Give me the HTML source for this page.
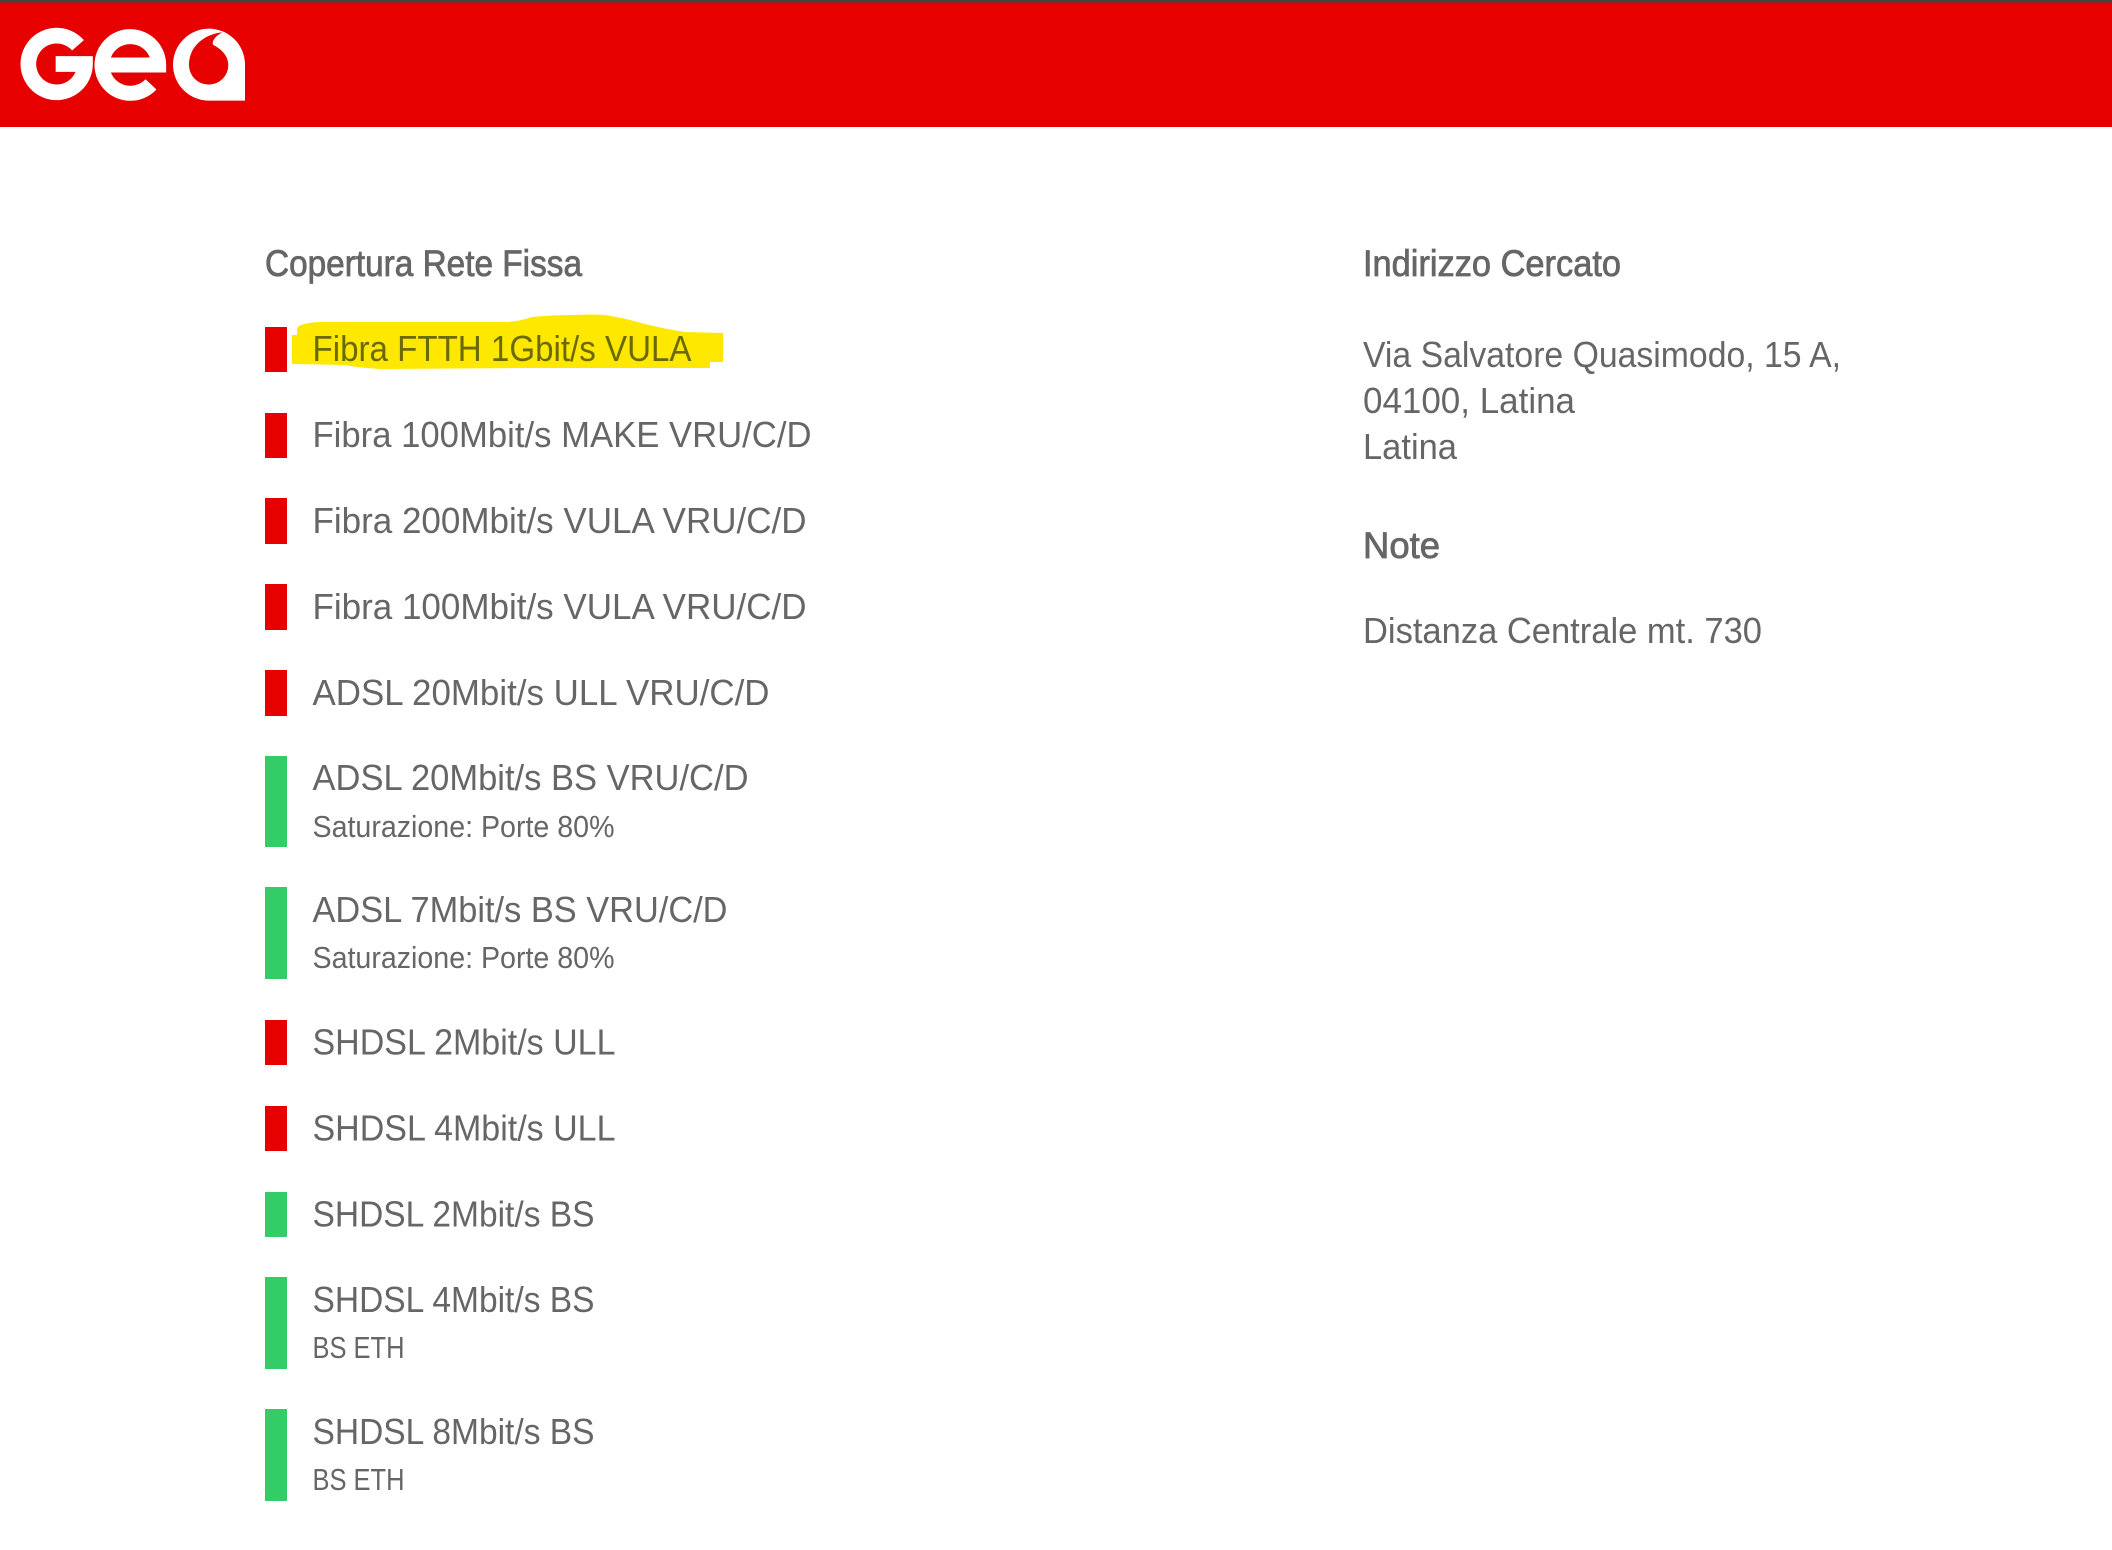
<!DOCTYPE html>
<html lang="it">
<head>
<meta charset="utf-8">
<title>Copertura Rete Fissa</title>
<style>
html,body{margin:0;padding:0;background:#fff;width:2112px;height:1550px;overflow:hidden}
svg{display:block}
text{font-family:"Liberation Sans",sans-serif;fill:#666;font-size:36px}
.h{stroke:#666;stroke-width:.8px;font-size:37px}
.s{font-size:31px}
</style>
</head>
<body>
<svg width="2112" height="1550" viewBox="0 0 2112 1550" xmlns="http://www.w3.org/2000/svg">
<rect width="2112" height="127" fill="#e60000"/>
<rect width="2112" height="2.5" fill="#444"/>
<g transform="scale(.33333)">
<path d="M234 136A85 85 0 1 0 255 192H167" fill="none" stroke="#fff" stroke-width="47"/>
<path d="M453 253A85 85 0 1 1 476 195H315" fill="none" stroke="#fff" stroke-width="45"/>
<path fill-rule="evenodd" fill="#fff" d="M735 302H627A108 108 0 1 1 735 193ZM668 97C625 100 567 130 567 195A59 59 0 0 0 685 195C685 165 660 145 640 135C633 122 650 105 668 97Z"/>
</g>

<path fill="#ffe800" d="M292 335H297V328Q299 325 305 324Q312 322 322 322H508Q520 321 532 317Q552 315 575 315Q592 314 605 315Q625 318 645 324Q665 329 685 332L723 333V362L710 362V368L518 368L382 369Q360 368 345 365L292 364Z"/>

<g fill="#e60000">
<rect x="265" y="327" width="22" height="45"/>
<rect x="265" y="413" width="22" height="45"/>
<rect x="265" y="498" width="22" height="46"/>
<rect x="265" y="584" width="22" height="46"/>
<rect x="265" y="670" width="22" height="46"/>
<rect x="265" y="1020" width="22" height="45"/>
<rect x="265" y="1106" width="22" height="45"/>
</g>
<g fill="#33cc66">
<rect x="265" y="756" width="22" height="91"/>
<rect x="265" y="887" width="22" height="92"/>
<rect x="265" y="1192" width="22" height="45"/>
<rect x="265" y="1277" width="22" height="92"/>
<rect x="265" y="1409" width="22" height="92"/>
</g>

<text class="h" x="265" y="276" textLength="317" lengthAdjust="spacingAndGlyphs">Copertura Rete Fissa</text>
<text x="312.5" y="361" textLength="379" lengthAdjust="spacingAndGlyphs" style="fill:#6b6a00">Fibra FTTH 1Gbit/s VULA</text>
<text x="312.5" y="447" textLength="499" lengthAdjust="spacingAndGlyphs">Fibra 100Mbit/s MAKE VRU/C/D</text>
<text x="312.5" y="533" textLength="494" lengthAdjust="spacingAndGlyphs">Fibra 200Mbit/s VULA VRU/C/D</text>
<text x="312.5" y="619" textLength="494" lengthAdjust="spacingAndGlyphs">Fibra 100Mbit/s VULA VRU/C/D</text>
<text x="312.5" y="705" textLength="457" lengthAdjust="spacingAndGlyphs">ADSL 20Mbit/s ULL VRU/C/D</text>
<text x="312.5" y="790" textLength="436" lengthAdjust="spacingAndGlyphs">ADSL 20Mbit/s BS VRU/C/D</text>
<text class="s" x="312.5" y="837" textLength="302" lengthAdjust="spacingAndGlyphs">Saturazione: Porte 80%</text>
<text x="312.5" y="922" textLength="415" lengthAdjust="spacingAndGlyphs">ADSL 7Mbit/s BS VRU/C/D</text>
<text class="s" x="312.5" y="968" textLength="302" lengthAdjust="spacingAndGlyphs">Saturazione: Porte 80%</text>
<text x="312.5" y="1054.500" textLength="303" lengthAdjust="spacingAndGlyphs">SHDSL 2Mbit/s ULL</text>
<text x="312.5" y="1140.500" textLength="303" lengthAdjust="spacingAndGlyphs">SHDSL 4Mbit/s ULL</text>
<text x="312.5" y="1226.500" textLength="282" lengthAdjust="spacingAndGlyphs">SHDSL 2Mbit/s BS</text>
<text x="312.5" y="1312" textLength="282" lengthAdjust="spacingAndGlyphs">SHDSL 4Mbit/s BS</text>
<text class="s" x="312.5" y="1358" textLength="92" lengthAdjust="spacingAndGlyphs">BS ETH</text>
<text x="312.5" y="1444" textLength="282" lengthAdjust="spacingAndGlyphs">SHDSL 8Mbit/s BS</text>
<text class="s" x="312.5" y="1490" textLength="92" lengthAdjust="spacingAndGlyphs">BS ETH</text>

<text class="h" x="1363" y="276" textLength="258" lengthAdjust="spacingAndGlyphs">Indirizzo Cercato</text>
<text x="1363" y="367" textLength="478" lengthAdjust="spacingAndGlyphs">Via Salvatore Quasimodo, 15 A,</text>
<text x="1363" y="413" textLength="212" lengthAdjust="spacingAndGlyphs">04100, Latina</text>
<text x="1363" y="459" textLength="94" lengthAdjust="spacingAndGlyphs">Latina</text>
<text class="h" x="1363" y="558" textLength="77" lengthAdjust="spacingAndGlyphs">Note</text>
<text x="1363" y="643" textLength="399" lengthAdjust="spacingAndGlyphs">Distanza Centrale mt. 730</text>
</svg>
</body>
</html>
